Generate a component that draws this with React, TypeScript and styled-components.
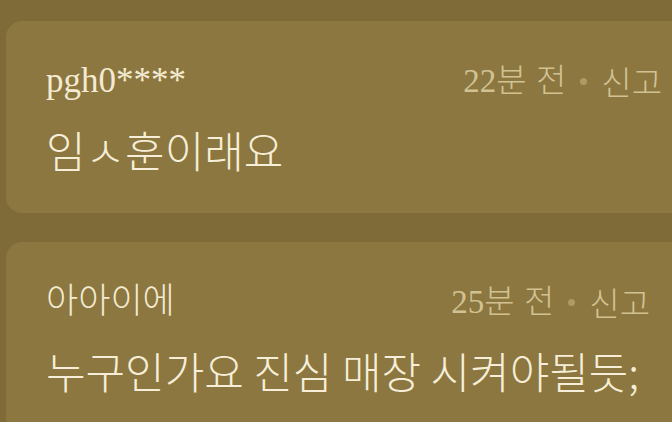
import styled, { createGlobalStyle } from "styled-components";

const GlobalStyle = createGlobalStyle`
  html, body {
    margin: 0;
    padding: 0;
    background-color: #7e6b37;
  }
`;

const Page = styled.div`
  width: 672px;
  height: 422px;
  overflow: hidden;
  box-sizing: border-box;
  padding: 21px 0 0 6px;
  background-color: #7e6b37;
`;

const CommentList = styled.ul`
  list-style: none;
  margin: 0;
  padding: 0;
  display: flex;
  flex-direction: column;
  gap: 29px;
`;

const Card = styled.li`
  width: 686px;
  box-sizing: border-box;
  padding: 38px 30px 38px 40px;
  border-radius: 16px;
  background-color: #8b773f;
  display: flex;
  flex-direction: column;
  gap: 20px;
`;

const Header = styled.div`
  display: flex;
  justify-content: space-between;
  align-items: center;
  height: 44px;
`;

const Nickname = styled.span`
  font-family: "Liberation Serif", "Noto Sans CJK KR", serif;
  font-size: 35px;
  font-weight: 300;
  line-height: 44px;
  color: #f3ead1;
`;

const Meta = styled.div<{ $inset: number }>`
  display: flex;
  align-items: center;
  gap: 14px;
  margin-right: ${(props) => props.$inset}px;
  font-family: "Liberation Serif", "Noto Sans CJK KR", serif;
  font-size: 33px;
  font-weight: 300;
  line-height: 44px;
  color: #d2c293;
`;

const Time = styled.span`
  word-spacing: 1px;
`;

const Dot = styled.span`
  width: 7px;
  height: 7px;
  border-radius: 50%;
  background-color: #ad9a66;
`;

const Report = styled.span`
  font-family: "Noto Sans CJK KR", sans-serif;
`;

const Body = styled.p`
  margin: 0;
  font-family: "Noto Sans CJK KR", "Noto Sans", sans-serif;
  font-size: 43px;
  font-weight: 300;
  line-height: 52px;
  color: #f6eed8;
  white-space: nowrap;
`;

interface IComment {
  id: number;
  author: string;
  ago: string;
  text: string;
  inset: number;
}

const comments: IComment[] = [
  { id: 1, author: "pgh0****", ago: "22분 전", text: "임ㅅ훈이래요", inset: 0 },
  { id: 2, author: "아아이에", ago: "25분 전", text: "누구인가요 진심 매장 시켜야될듯;", inset: 12 },
];

function App() {
  return (
    <>
      <GlobalStyle />
      <Page>
        <CommentList>
          {comments.map((c) => (
            <Card key={c.id}>
              <Header>
                <Nickname>{c.author}</Nickname>
                <Meta $inset={c.inset}>
                  <Time>{c.ago}</Time>
                  <Dot />
                  <Report>신고</Report>
                </Meta>
              </Header>
              <Body>{c.text}</Body>
            </Card>
          ))}
        </CommentList>
      </Page>
    </>
  );
}

export default App;
